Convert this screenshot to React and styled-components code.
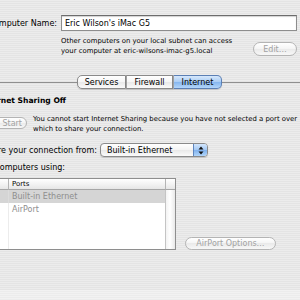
import { Fragment } from "react";
import styled, { createGlobalStyle } from "styled-components";

const GlobalStyle = createGlobalStyle`
  html, body {
    margin: 0;
    padding: 0;
  }
  body {
    font-family: "DejaVu Sans", "Liberation Sans", sans-serif;
  }
`;

const Pane = styled.div`
  width: 300px;
  height: 300px;
  overflow: hidden;
  display: flex;
  flex-direction: column;
  color: #000;
  font-size: 8px;
  background: repeating-linear-gradient(
    to bottom,
    #ececec 0,
    #ececec 1px,
    #e4e4e4 1px,
    #e4e4e4 2px
  );
`;

const NameGrid = styled.div`
  display: grid;
  grid-template-columns: 61px 1fr 44px;
  grid-template-rows: 16px auto;
  row-gap: 5px;
  height: 75px;
  box-sizing: border-box;
  padding: 15px 3px 0 0;
`;

const Lead = styled.div`
  width: ${(p) => p.$w}px;
  flex: none;
  display: flex;
  justify-content: flex-end;
  align-items: center;
  white-space: nowrap;
`;

const NameLabel = styled(Lead)`
  grid-column: 1;
  padding-right: 4px;
  box-sizing: border-box;
`;

const TextField = styled.div`
  grid-column: 2 / 4;
  display: flex;
  align-items: center;
  padding-left: 3px;
  background: #fff;
  border: 1px solid #8d8d8d;
  border-top-color: #6c6c6c;
  box-shadow: inset 0 1px 1px rgba(0, 0, 0, 0.18);
  white-space: nowrap;
`;

const Small = styled.div`
  font-size: 6.9px;
  line-height: 10px;
  white-space: nowrap;
`;

const Hint = styled(Small)`
  grid-column: 2;
`;

const AquaButton = styled.div`
  flex: none;
  width: ${(p) => p.$w}px;
  height: ${(p) => p.$h || 13}px;
  box-sizing: border-box;
  display: flex;
  align-items: center;
  justify-content: center;
  border: 1px solid #b4b4b4;
  border-radius: 8px;
  background: linear-gradient(#ffffff, #f4f4f4 50%, #eaeaea 50%, #f8f8f8);
  color: #a2a2a2;
  white-space: nowrap;
`;

const EditButton = styled(AquaButton)`
  grid-column: 3;
  align-self: start;
  margin-top: 6px;
`;

const StartButton = styled(AquaButton)`
  margin-top: 3px;
  justify-content: flex-end;
  padding-right: 4px;
`;

const TabBar = styled.div`
  display: flex;
  align-items: center;
  height: 14px;
`;

const Rule = styled.div`
  height: 1px;
  background: #8f8f8f;
  ${(p) => (p.$w ? `width: ${p.$w}px; flex: none;` : "flex: 1;")}
`;

const Tab = styled.div`
  width: ${(p) => p.$w}px;
  height: 14px;
  box-sizing: border-box;
  display: flex;
  align-items: center;
  justify-content: center;
  border: 1px solid ${(p) => (p.$active ? "#5b7fb4" : "#8a8a8a")};
  border-left-width: ${(p) => (p.$first ? 1 : 0)}px;
  border-radius: ${(p) =>
    p.$first ? "5px 0 0 5px" : p.$last ? "0 5px 5px 0" : "0"};
  background: ${(p) =>
    p.$active
      ? "linear-gradient(#d6e8fc, #a9ccf4 50%, #84b5ee 50%, #b3d6fa)"
      : "linear-gradient(#ffffff, #f5f5f5 50%, #e8e8e8 50%, #fafafa)"};
  box-shadow: 0 1px 1px rgba(0, 0, 0, 0.15);
  & + & {
    border-left: 1px solid #a0a0a0;
  }
`;

const Section = styled.div`
  display: flex;
  flex-direction: column;
`;

const Title = styled(Lead)`
  margin-top: 6px;
  line-height: 12px;
  font-size: 7.6px;
  font-weight: bold;
`;

const StartRow = styled.div`
  display: flex;
  align-items: flex-start;
  margin-top: 7px;
`;

const StartText = styled(Small)`
  margin-left: 6px;
`;

const PopupRow = styled.div`
  display: flex;
  align-items: center;
  height: 14px;
  margin-top: 9px;
`;

const Popup = styled.div`
  display: flex;
  width: 108px;
  height: 14px;
  margin-left: 3px;
  box-sizing: border-box;
  overflow: hidden;
  border: 1px solid #8a8a8a;
  border-radius: 4px;
  background: linear-gradient(#ffffff, #f3f3f3 50%, #e8e8e8 50%, #fbfbfb);
  box-shadow: 0 1px 1px rgba(0, 0, 0, 0.15);
`;

const PopupText = styled.span`
  flex: 1;
  display: flex;
  align-items: center;
  padding-left: 6px;
  white-space: nowrap;
`;

const PopupArrows = styled.span`
  width: 13px;
  display: flex;
  align-items: center;
  justify-content: center;
  border-left: 1px solid #5f86bf;
  background: linear-gradient(#d3e6fc, #a3c8f3 50%, #7eb0ed 50%, #b0d5fa);
`;

const UsingLabel = styled(Lead)`
  margin-top: 6px;
  line-height: 10px;
`;

const TableRow = styled.div`
  display: flex;
  align-items: flex-end;
  margin-top: 5px;
`;

const Table = styled.div`
  margin-left: -20px;
  width: 196px;
  height: 72px;
  flex: none;
  box-sizing: border-box;
  display: grid;
  grid-template-columns: 28px 157px 9px;
  grid-template-rows: 11px 13px 13px 1fr;
  background: #fff;
  border: 1px solid #8e8e8e;
`;

const HeadCell = styled.div`
  display: flex;
  align-items: center;
  padding-left: 3px;
  font-size: 6.9px;
  background: linear-gradient(#ffffff, #f2f2f2 55%, #e6e6e6);
  border-bottom: 1px solid #a6a6a6;
  border-right: ${(p) => (p.$end ? "0" : "1px solid #b4b4b4")};
`;

const CheckCell = styled.div`
  background: ${(p) => (p.$sel ? "#d5d5d5" : "#fff")};
  border-right: 1px solid ${(p) => (p.$sel ? "#dcdcdc" : "#ececec")};
`;

const PortCell = styled.div`
  display: flex;
  align-items: center;
  padding-left: 3px;
  color: #8e8e8e;
  white-space: nowrap;
  background: ${(p) => (p.$sel ? "#d5d5d5" : "#fff")};
  border-right: 1px solid #c4c4c4;
`;

const ScrollTrack = styled.div`
  grid-column: 3;
  grid-row: 2 / 5;
  background: linear-gradient(to right, #f3f3f3, #ffffff 45%, #e9e9e9);
`;

const OptionsButton = styled(AquaButton)`
  margin-left: 9px;
`;

const Footer = styled.div`
  margin-top: 40px;
  flex: 1;
  background: repeating-linear-gradient(
    to bottom,
    #f2f2f2 0,
    #f2f2f2 1px,
    #ececec 1px,
    #ececec 2px
  );
`;

const Arrows = () => (
  <svg width="6" height="9" viewBox="0 0 6 9">
    <path d="M3 0.5 L5.5 3.5 H0.5 Z" fill="#111" />
    <path d="M3 8.5 L5.5 5.5 H0.5 Z" fill="#111" />
  </svg>
);

const ports = [
  { name: "Built-in Ethernet", sel: true },
  { name: "AirPort", sel: false },
];

export default function App() {
  return (
    <>
      <GlobalStyle />
      <Pane>
        <NameGrid>
          <NameLabel $w={61}>Computer Name:</NameLabel>
          <TextField>Eric Wilson's iMac G5</TextField>
          <Hint>
            Other computers on your local subnet can access
            <br />
            your computer at eric-wilsons-imac-g5.local
          </Hint>
          <EditButton $w={44} $h={14}>
            Edit…
          </EditButton>
        </NameGrid>

        <TabBar>
          <Rule $w={77} />
          <Tab $w={49} $first>
            Services
          </Tab>
          <Tab $w={47}>Firewall</Tab>
          <Tab $w={49} $last $active>
            Internet
          </Tab>
          <Rule />
        </TabBar>

        <Section>
          <Title $w={66}>Internet Sharing Off</Title>

          <StartRow>
            <Lead $w={27}>
              <StartButton $w={50} $h={12}>
                Start
              </StartButton>
            </Lead>
            <StartText>
              You cannot start Internet Sharing because you have not selected a
              port over
              <br />
              which to share your connection.
            </StartText>
          </StartRow>

          <PopupRow>
            <Lead $w={97}>To share your connection from:</Lead>
            <Popup>
              <PopupText>Built-in Ethernet</PopupText>
              <PopupArrows>
                <Arrows />
              </PopupArrows>
            </Popup>
          </PopupRow>

          <UsingLabel $w={65}>On computers using:</UsingLabel>

          <TableRow>
            <Table>
              <HeadCell />
              <HeadCell>Ports</HeadCell>
              <HeadCell $end />
              {ports.map((p) => (
                <Fragment key={p.name}>
                  <CheckCell $sel={p.sel} />
                  <PortCell $sel={p.sel}>{p.name}</PortCell>
                </Fragment>
              ))}
              <CheckCell />
              <PortCell />
              <ScrollTrack />
            </Table>
            <OptionsButton $w={91}>AirPort Options…</OptionsButton>
          </TableRow>
        </Section>

        <Footer />
      </Pane>
    </>
  );
}
